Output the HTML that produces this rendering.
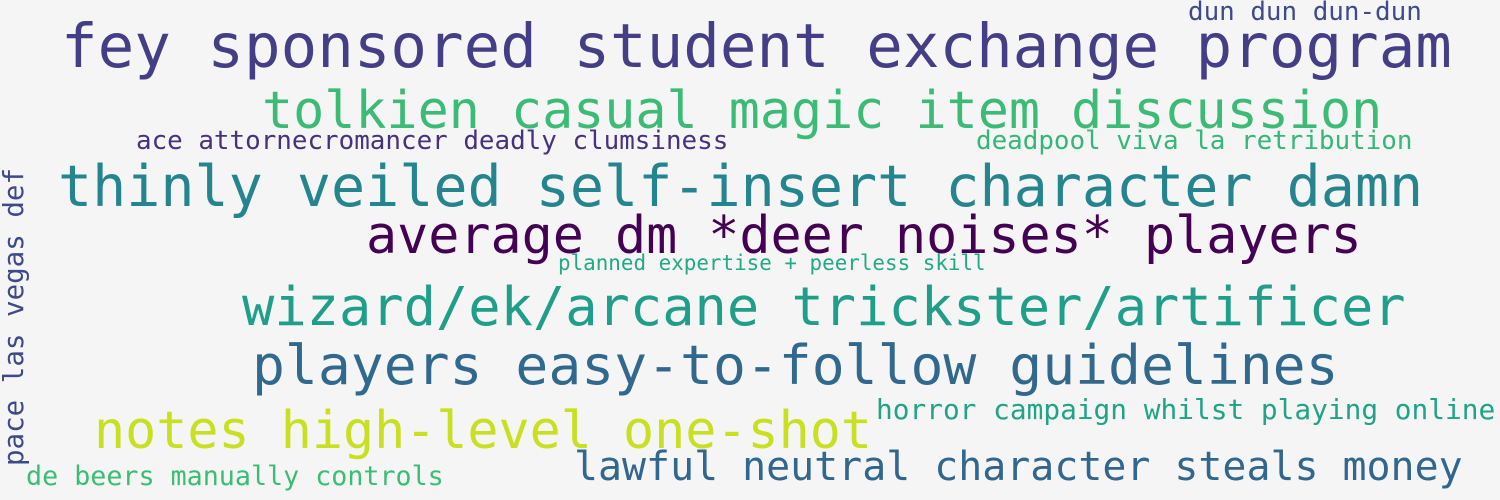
<!DOCTYPE html>
<html><head><meta charset="utf-8"><style>
html,body{margin:0;padding:0}
body{width:1500px;height:500px;background:#f5f5f5;position:relative;overflow:hidden;font-family:"DejaVu Sans Mono","Liberation Mono",monospace}
span{position:absolute;white-space:nowrap;line-height:1}
</style></head><body>
<span style="left:61px;top:17px;font-size:60.8px;color:#433e85">fey sponsored student exchange program</span>
<span style="left:262px;top:86px;font-size:51.7px;color:#3bbb75">tolkien casual magic item discussion</span>
<span style="left:58px;top:159px;font-size:56.7px;color:#25858e">thinly veiled self-insert character damn</span>
<span style="left:366px;top:211px;font-size:51.7px;color:#440154">average dm *deer noises* players</span>
<span style="left:242px;top:280px;font-size:53.7px;color:#1f9e89">wizard/ek/arcane trickster/artificer</span>
<span style="left:252px;top:338px;font-size:54.7px;color:#31688e">players easy-to-follow guidelines</span>
<span style="left:94px;top:406px;font-size:51.7px;color:#c8e020">notes high-level one-shot</span>
<span style="left:574px;top:448px;font-size:39.9px;color:#31668e">lawful neutral character steals money</span>
<span style="left:876px;top:396px;font-size:27.8px;color:#20a386">horror campaign whilst playing online</span>
<span style="left:26px;top:464px;font-size:26.7px;color:#3dbc74">de beers manually controls</span>
<span style="left:136px;top:129px;font-size:25.9px;color:#46327e">ace attornecromancer deadly clumsiness</span>
<span style="left:976px;top:129px;font-size:25.9px;color:#35b779">deadpool viva la retribution</span>
<span style="left:1188px;top:0px;font-size:25.9px;color:#3e4a89">dun dun dun-dun</span>
<span style="left:558px;top:253px;font-size:20.9px;color:#23a983">planned expertise + peerless skill</span>
<span style="left:1px;top:466px;font-size:27.5px;color:#3e4989;transform-origin:0 0;transform:rotate(-90deg)">pace las vegas def</span>
</body></html>
